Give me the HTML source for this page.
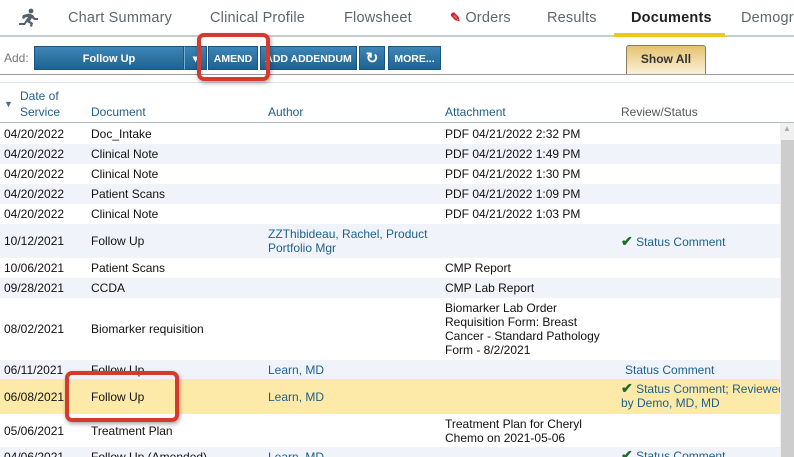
<!DOCTYPE html>
<html><head><meta charset="utf-8"><style>
*{margin:0;padding:0;box-sizing:border-box}
body{width:794px;height:457px;overflow:hidden;background:#fff;font-family:"Liberation Sans",Arial,sans-serif;position:relative}
.nav{position:absolute;top:0;left:0;width:794px;height:37px;border-bottom:2px solid #c3ccd4}
.nav span{position:absolute;top:10px;font-size:14.5px;color:#5d6670;letter-spacing:.2px;white-space:nowrap}
.ul{position:absolute;left:614px;top:33px;width:111px;height:4px;background:#f4c51d}
.btn{position:absolute;top:46px;height:24px;background:linear-gradient(#3d86b8,#1f628f);color:#fff;font-size:10.5px;font-weight:bold;text-align:center;line-height:24px;border:1px solid #1a5580}
.showall{position:absolute;left:626px;top:45px;width:80px;height:30px;border:1px solid #8a7c5f;border-bottom:none;border-radius:3px 3px 0 0;background:linear-gradient(#e6c270,#fbf3dd);font-size:12px;font-weight:bold;color:#333;text-align:center;line-height:26px}
.row{position:absolute;left:0;width:780px;font-size:12px;color:#111;overflow:hidden}
.row div{position:absolute;line-height:14px;white-space:nowrap}
.c1{left:4px}.c2{left:91px}.c3{left:268px;color:#1e5f8a}.c4{left:445px}.c5{left:621px;color:#1e5f8a}
.ck{color:#1f6b2a;font-weight:bold;font-size:14px}
.box{position:absolute;border:4px solid #d63a2c;border-radius:7px;box-shadow:1px 2px 4px rgba(0,0,0,.35)}
</style></head><body>
<div class="nav">
<svg style="position:absolute;left:17px;top:8px" width="24" height="19" viewBox="0 0 24 19"><g fill="#56606b"><circle cx="14" cy="3" r="2.4"/><path d="M6 7 L12 5.5 L16 7 L18 10 L21 10 L21 12 L17 12 L15 10 L13 13 L16 15 L15 19 L13 18 L13.5 16 L10 14 L8 17 L2 17 L2 15 L7 15 L11 9 L8 9.5 L7 11 L5 10z"/></g></svg>
<span style="left:68px">Chart Summary</span>
<span style="left:210px">Clinical Profile</span>
<span style="left:344px">Flowsheet</span>
<span style="left:450px;color:#5d6670"><b style="color:#c8202a;font-size:13px">✎</b> Orders</span>
<span style="left:547px">Results</span>
<span style="left:631px;color:#222;font-weight:bold">Documents</span>
<span style="left:741px">Demogr</span>
</div>
<div class="ul"></div>
<div style="position:absolute;left:4px;top:51px;font-size:12px;color:#777">Add:</div>
<div class="btn" style="left:34px;width:150px;font-size:11px">Follow Up</div>
<div class="btn" style="left:184px;width:23px;border-left:1px solid #7aaed0">&#9662;</div>
<div class="btn" style="left:208px;width:50px">AMEND</div>
<div class="btn" style="left:260px;width:97px">ADD ADDENDUM</div>
<div class="btn" style="left:359px;width:26px;font-size:15px">&#8635;</div>
<div class="btn" style="left:388px;width:53px">MORE...</div>
<div class="showall">Show All</div>
<div style="position:absolute;left:0;top:74px;width:794px;height:1px;background:#9a9a9a"></div>
<div style="position:absolute;left:0;top:82px;width:794px;height:1px;background:#dde2e6"></div>
<div class="row" style="top:88px;height:34px;font-size:12px;color:#1e5f8a">
<div style="left:4px;top:9px;font-size:9px;color:#4a6a88">&#9660;</div>
<div style="left:20px;top:1px">Date of</div><div style="left:20px;top:17px">Service</div>
<div style="left:91px;top:17px">Document</div><div style="left:268px;top:17px">Author</div>
<div style="left:445px;top:17px">Attachment</div><div style="left:621px;top:17px;color:#555">Review/Status</div>
</div>
<div style="position:absolute;left:0;top:122px;width:794px;height:1px;background:#b5bcc4"></div>
<div class="row" style="top:123px;height:21px;background:#fff"><div class="c1" style="top:4px">04/20/2022</div><div class="c2" style="top:4px">Doc_Intake</div><div class="c4" style="top:4px">PDF 04/21/2022 2:32 PM</div></div>
<div class="row" style="top:144px;height:20px;background:#f0f4fa"><div class="c1" style="top:3px">04/20/2022</div><div class="c2" style="top:3px">Clinical Note</div><div class="c4" style="top:3px">PDF 04/21/2022 1:49 PM</div></div>
<div class="row" style="top:164px;height:20px;background:#fff"><div class="c1" style="top:3px">04/20/2022</div><div class="c2" style="top:3px">Clinical Note</div><div class="c4" style="top:3px">PDF 04/21/2022 1:30 PM</div></div>
<div class="row" style="top:184px;height:20px;background:#f0f4fa"><div class="c1" style="top:3px">04/20/2022</div><div class="c2" style="top:3px">Patient Scans</div><div class="c4" style="top:3px">PDF 04/21/2022 1:09 PM</div></div>
<div class="row" style="top:204px;height:20px;background:#fff"><div class="c1" style="top:3px">04/20/2022</div><div class="c2" style="top:3px">Clinical Note</div><div class="c4" style="top:3px">PDF 04/21/2022 1:03 PM</div></div>
<div class="row" style="top:224px;height:34px;background:#f0f4fa"><div class="c1" style="top:10px">10/12/2021</div><div class="c2" style="top:10px">Follow Up</div><div class="c3" style="top:3px">ZZThibideau, Rachel, Product<br>Portfolio Mgr</div><div class="c5" style="top:10px"><span class="ck">✔</span> Status Comment</div></div>
<div class="row" style="top:258px;height:20px;background:#fff"><div class="c1" style="top:3px">10/06/2021</div><div class="c2" style="top:3px">Patient Scans</div><div class="c4" style="top:3px">CMP Report</div></div>
<div class="row" style="top:278px;height:20px;background:#f0f4fa"><div class="c1" style="top:3px">09/28/2021</div><div class="c2" style="top:3px">CCDA</div><div class="c4" style="top:3px">CMP Lab Report</div></div>
<div class="row" style="top:298px;height:62px;background:#fff"><div class="c1" style="top:24px">08/02/2021</div><div class="c2" style="top:24px">Biomarker requisition</div><div class="c4" style="top:3px;line-height:14px">Biomarker Lab Order<br>Requisition Form: Breast<br>Cancer - Standard Pathology<br>Form - 8/2/2021</div></div>
<div class="row" style="top:360px;height:19px;background:#f0f4fa"><div class="c1" style="top:3px">06/11/2021</div><div class="c2" style="top:3px">Follow Up</div><div class="c3" style="top:3px">Learn, MD</div><div class="c5" style="top:3px;left:625px">Status Comment</div></div>
<div class="row" style="top:379px;height:35px;background:#fdeaa8"><div class="c1" style="top:11px">06/08/2021</div><div class="c2" style="top:11px">Follow Up</div><div class="c3" style="top:11px">Learn, MD</div><div class="c5" style="top:2px"><span class="ck">✔</span> Status Comment; Reviewed<br>by Demo, MD, MD</div></div>
<div class="row" style="top:414px;height:33px;background:#fff"><div class="c1" style="top:10px">05/06/2021</div><div class="c2" style="top:10px">Treatment Plan</div><div class="c4" style="top:3px">Treatment Plan for Cheryl<br>Chemo on 2021-05-06</div></div>
<div class="row" style="top:447px;height:10px;background:#f0f4fa"><div class="c1" style="top:3px">04/06/2021</div><div class="c2" style="top:3px">Follow Up (Amended)</div><div class="c3" style="top:3px">Learn, MD</div><div class="c5" style="top:1px"><span class="ck">✔</span> Status Comment</div></div>
<div style="position:absolute;left:780px;top:123px;width:14px;height:334px;background:#f0f0f0"></div>
<div style="position:absolute;left:781px;top:140px;width:13px;height:317px;background:#cdcdcd"></div>
<div style="position:absolute;left:783px;top:124px;font-size:8px;color:#aaa">&#9650;</div>
<div class="box" style="left:197px;top:33px;width:73px;height:48px"></div>
<div class="box" style="left:65px;top:371px;width:114px;height:51px"></div>
</body></html>
